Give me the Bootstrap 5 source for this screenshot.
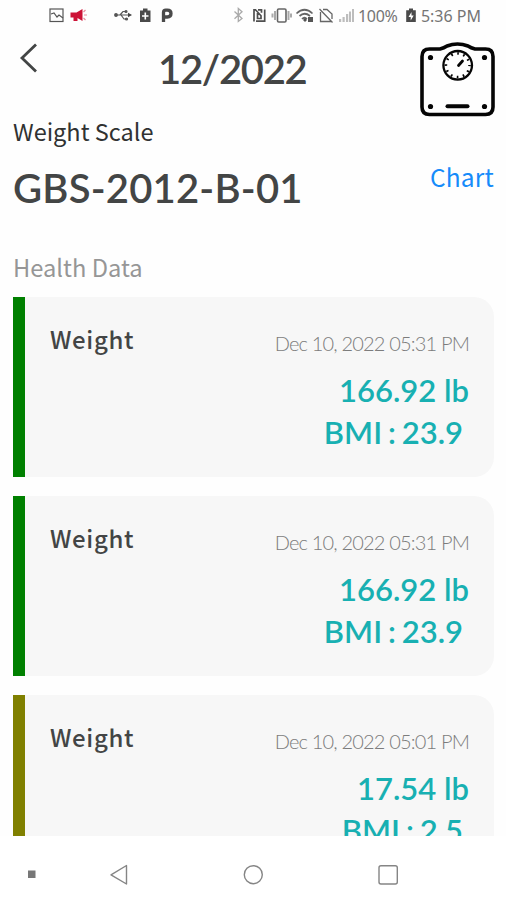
<!DOCTYPE html>
<html lang="en">
<head>
<meta charset="utf-8">
<meta name="viewport" content="width=device-width, initial-scale=1">
<title>Weight Scale</title>
<link href="https://cdn.jsdelivr.net/npm/bootstrap@5.3.0/dist/css/bootstrap.min.css" rel="stylesheet">
<style>
body{font-family:"Noto Sans CJK SC","Noto Sans",sans-serif;color:#434545;height:900px;overflow:hidden;background:#fefefe}
svg{display:block;flex:none}
.lato{font-family:Lato,sans-serif}
.status{height:32px;padding:0 25px 0 49px;font:16px/32px "Noto Sans",sans-serif;color:#757575}
.status-left{margin-right:57px}
.battery-text{margin-left:2px;letter-spacing:-.3px}
.topbar{height:86px;padding:0 11px 0 13px}
.back{margin:11px 0 0 6px}
.month{font-size:40px;line-height:48px;font-weight:600;margin-top:13px;margin-left:119px;letter-spacing:-1.3px}
.scale-icon{margin-top:9px}
.device{height:179px;padding:0 12px 0 13px}
.kind{font-size:23.5px;line-height:34px;color:#303232;margin-top:-4px}
.model{font-size:40px;line-height:48px;font-weight:600;margin-top:16px;white-space:nowrap;letter-spacing:.2px}
.chart-link{font-size:24.5px;line-height:34px;color:#168bfa;margin-top:42px;letter-spacing:.2px}
.section-name{font-size:23.7px;line-height:34px;color:#969696;margin-bottom:13px}
.readings{height:539px;padding:0 12px 0 13px;gap:19px}
.reading{flex:none;height:180.2px;background:#f7f7f7;border-left:12px solid green;border-radius:0 20px 20px 0;padding:24px 25px 0}
.reading.low{border-left-color:#808000}
.label{font-size:24px;line-height:34px;font-weight:500;letter-spacing:.65px;margin-top:1px}
.date{font-size:20px;line-height:24px;font-weight:300;color:#7c7c7c;margin:10px 0 0;letter-spacing:-.82px}
.value{font-size:31px;line-height:42px;font-weight:600;color:#18b0b2;white-space:pre}
.bmi{word-spacing:-1.8px}
.first-value{margin-top:14px}
.sysnav{height:64px;padding:14px 0 0 26px}
</style>
</head>
<body>
<div class="status d-flex align-items-center">
  <svg class="status-left" width="126" height="32" viewBox="49 0 126 32" fill="none" stroke="#555" stroke-width="1.2">
    <rect x="50" y="9" width="13" height="12.5"/><path d="M51 14l3-1 3 4 2-2 4 3"/>
    <g fill="#cc1236" stroke="none"><path d="M70.500 12.500h6l6-3.500v12l-5-3v3h-4v-3.500h-3z"/></g>
    <path stroke="#e88b9d" d="M83.5 12l2-2M84 15h3M83.5 18l2 2"/>
    <path stroke="#555" d="M116 15h14M120 15l3-3.5h3M121 15l3 4h3"/><path fill="#444" stroke="none" d="M128 12.800l4 2.200-4 2.200z"/><circle cx="116" cy="15" r="1.300" fill="#555"/><circle cx="126" cy="11.5" r="1" fill="#555"/><circle cx="126.500" cy="19" r="1" fill="#555"/>
    <path fill="#4a4a4a" stroke="none" d="M143 8.500h4.500v2h3v11.500h-10.500v-11.500h3z"/><path stroke="#fff" stroke-width="1.6" d="M145.300 12.500v7M142 16h6.500"/>
    <path stroke="#4a4a4a" stroke-width="3.300" d="M163.500 22v-9.500q0-2.300 2.300-2.300h1.500q3.700 0 3.700 3.400t-3.700 3.400h-3"/>
  </svg>
  <svg width="124" height="32" viewBox="232 0 124 32" fill="none" stroke="#666" stroke-width="1.300">
    <path stroke="#aaa" d="M234.500 11.500l7.500 7-3.700 3V8.500l3.700 3.200-7.500 7"/>
    <path stroke="#4f4f4f" stroke-width="1.700" d="M254 21.500V9.800h1.500l5.500 6v2.700h-3.500v-5.500M256 21.200h8.700V9.500M258 9.800h3.500v3"/>
    <rect x="277.500" y="9" width="8.500" height="13" rx="1.200" stroke-width="1.600"/><path stroke="#aaa" stroke-width="2" d="M275 11v9M288.500 11v9M272.500 13.500v4M291 13.500v4"/>
    <path stroke-width="1.700" d="M296.500 13.500q8-7.500 16 0M299.500 16q5-4.500 10.500 0M302 19q2.500-2.500 5 0"/><path fill="#555" stroke="none" d="M303 20l2-2 2 2-2 2zM308 17h5v5h-5z"/>
    <path d="M320.500 12v9.500h10.500M323 9.500h4l5 4.500v5M319.500 9l13 13.500"/>
    <g fill="#bdbdbd" stroke="none"><path d="M339 19h2.200v3H339zM342.500 17h2.200v5h-2.200zM346 14h2.200v8H346zM349 11.500h2v10.500h-2zM352 9h2v13h-2z"/></g>
  </svg>
  <span class="battery-text">100%</span>
  <svg class="ms-auto" width="12" height="32" viewBox="0 0 12 32"><path fill="#4a4a4a" d="M4 8.500h4v1.800h2.800V22H1.200V10.300H4z"/><path fill="#fff" d="M6.500 12L3.500 17h2.200v3.500l3-5H6.500z"/></svg>
  <span class="text-nowrap ms-1">5:36 PM</span>
</div>

<header class="topbar d-flex align-items-start">
  <svg class="back" width="20" height="32" viewBox="0 0 20 32" fill="none" stroke="#434545" stroke-width="2.800"><path d="M17 1.500L3 15l14 13.500"/></svg>
  <div class="month lato">12/2022</div>
  <svg class="scale-icon ms-auto" width="76" height="78" viewBox="419 41 76 78" fill="none" stroke="#050505">
    <path stroke-width="3.600" d="M429.500 49H440q4-1 7-3 10.500-4 21 0 3 2 7 3h10.500q7.500 0 7.500 7.500v50.500q0 7.500-7.500 7.500h-56q-7.500 0-7.500-7.500v-50.500q0-7.500 7.500-7.500z"/>
    <circle cx="457.700" cy="65.300" r="14.300" stroke-width="2.300"/>
    <circle cx="457.700" cy="65.300" r="11.800" stroke-width="2.600" stroke-dasharray="1.700 4.478" stroke-dashoffset=".850"/>
    <path stroke-width="2.800" stroke-linecap="round" d="M458.500 65.500l4-4.500"/>
    <path stroke-width="4" stroke-linecap="round" d="M447.500 106.300h20"/>
    <g fill="#050505" stroke="none"><circle cx="430.500" cy="57.500" r="2.600"/><circle cx="484.500" cy="57.500" r="2.600"/><circle cx="430.500" cy="106.500" r="2.600"/><circle cx="484.500" cy="106.500" r="2.600"/></g>
  </svg>
</header>

<section class="device d-flex flex-column">
  <div class="d-flex justify-content-between align-items-start">
    <div>
      <div class="kind">Weight Scale</div>
      <div class="model lato">GBS-2012-B-01</div>
    </div>
    <a class="chart-link text-decoration-none" href="#">Chart</a>
  </div>
  <div class="section-name mt-auto">Health Data</div>
</section>

<main class="readings d-flex flex-column overflow-hidden">
  <article class="reading d-flex justify-content-between">
    <div class="label">Weight</div>
    <div class="lato text-end">
      <div class="date">Dec 10, 2022 05:31 PM</div>
      <div class="value first-value">166.92 lb</div>
      <div class="value bmi">BMI : 23.9 </div>
    </div>
  </article>
  <article class="reading d-flex justify-content-between">
    <div class="label">Weight</div>
    <div class="lato text-end">
      <div class="date">Dec 10, 2022 05:31 PM</div>
      <div class="value first-value">166.92 lb</div>
      <div class="value bmi">BMI : 23.9 </div>
    </div>
  </article>
  <article class="reading low d-flex justify-content-between">
    <div class="label">Weight</div>
    <div class="lato text-end">
      <div class="date">Dec 10, 2022 05:01 PM</div>
      <div class="value first-value">17.54 lb</div>
      <div class="value bmi">BMI : 2.5 </div>
    </div>
  </article>
</main>

<nav class="sysnav bg-white">
  <svg width="380" height="48" viewBox="26 850 380 48" fill="none" stroke="#858585" stroke-width="1.400">
    <rect x="28" y="870.500" width="7.500" height="7.500" fill="#777" stroke="none"/>
    <path stroke-linejoin="round" d="M126.500 865.500v18.500l-15.500-9.200z"/>
    <circle cx="253.300" cy="874.700" r="9"/>
    <rect x="379" y="865.700" width="18.300" height="18.300" rx="2"/>
  </svg>
</nav>
<script src="https://cdn.jsdelivr.net/npm/bootstrap@5.3.0/dist/js/bootstrap.bundle.min.js"></script>
</body>
</html>
